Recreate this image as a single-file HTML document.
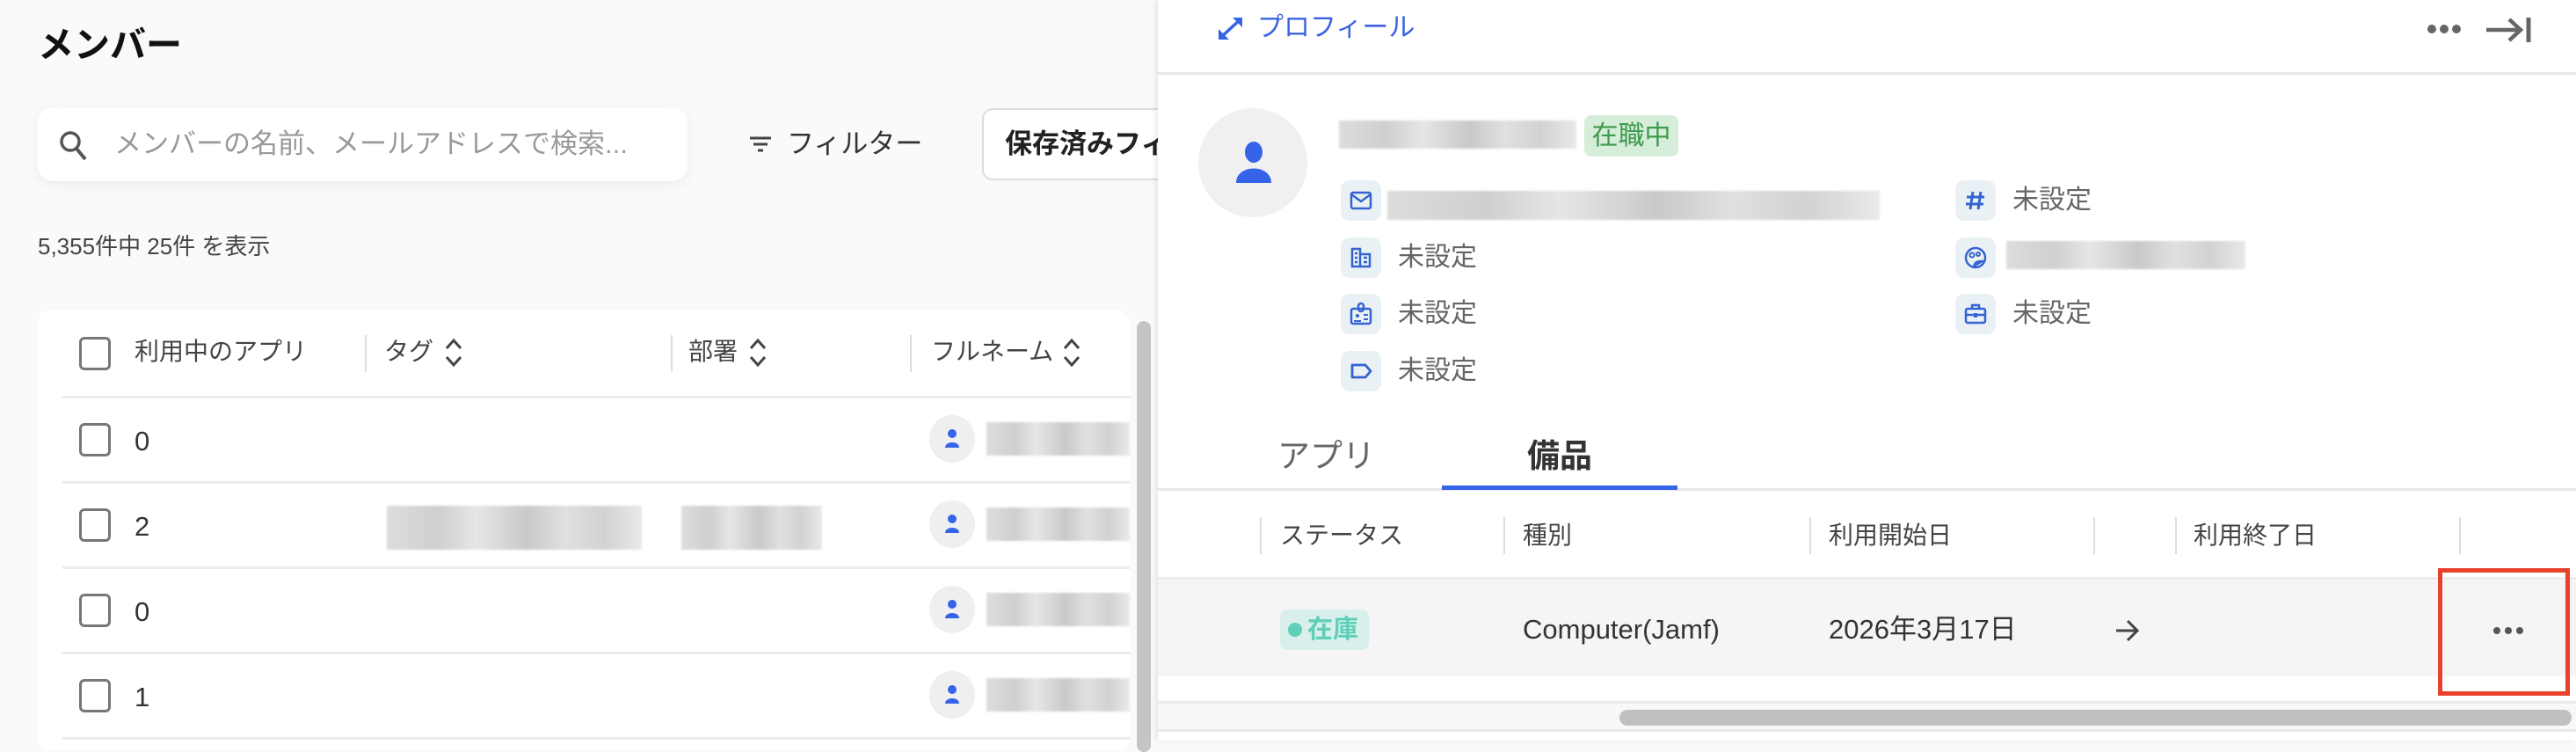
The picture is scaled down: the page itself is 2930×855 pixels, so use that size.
<!DOCTYPE html>
<html><head><meta charset="utf-8"><style>
*{margin:0;padding:0;box-sizing:border-box}
body{width:2930px;height:842px;overflow:hidden;background:#fafafa;font-family:"Liberation Sans","Noto Sans CJK JP",sans-serif;position:relative;color:#333;line-height:1}
.a{position:absolute;white-space:nowrap}
.blur{position:absolute;background:linear-gradient(90deg,#ddd,#cfcfcf 20%,#e6e6e6 35%,#c9c9c9 55%,#e0e0e0 70%,#d2d2d2 85%,#e9e9e9);filter:blur(1px)}
.cb{position:absolute;left:90px;width:36px;height:38px;border:3px solid #777;border-radius:6px;background:#fff}
.hl{position:absolute;height:3px;background:#ebebeb}
.sep{position:absolute;width:2px;background:#ddd}
.av{position:absolute;left:1057px;width:52px;height:54px;border-radius:50%;background:#efefef}
.ib{position:absolute;width:46px;height:46px;border-radius:10px;background:#e9f1f5}
.ib svg{position:absolute;left:9px;top:9px}
.t{position:absolute;font-size:30px;color:#666;white-space:nowrap;line-height:1}
</style></head><body>
<div class="a" style="left:43px;top:31px;font-size:41px;font-weight:bold;color:#111">メンバー</div>
<div class="a" style="left:43px;top:122px;width:739px;height:84px;background:#fff;border-radius:18px;box-shadow:0 4px 14px rgba(0,0,0,.06)"></div>
<svg class="a" style="left:66px;top:147px" width="36" height="38" viewBox="0 0 36 38"><circle cx="14" cy="14" r="10" fill="none" stroke="#555" stroke-width="3.5"/><path d="M21 22l10 12" stroke="#555" stroke-width="4"/></svg>
<div class="a" style="left:130px;top:148px;font-size:31px;color:#999">メンバーの名前、メールアドレスで検索...</div>
<svg class="a" style="left:851px;top:154px" width="28" height="22"><path d="M2 3h24M6 10h16M11 17h6" stroke="#444" stroke-width="3"/></svg>
<div class="a" style="left:895px;top:148px;font-size:31px;color:#333">フィルター</div>
<div class="a" style="left:1117px;top:123px;width:260px;height:82px;background:#fff;border:2px solid #ddd;border-radius:12px"></div>
<div class="a" style="left:1143px;top:148px;font-size:31px;font-weight:bold;color:#222">保存済みフィルター</div>
<div class="a" style="left:43px;top:267px;font-size:26px;color:#444">5,355件中 25件 を表示</div>
<div class="a" style="left:43px;top:353px;width:1242px;height:500px;background:#fff;border-radius:14px"></div>
<div class="cb" style="top:383px"></div>
<div class="a" style="left:153px;top:386px;font-size:28px;color:#444">利用中のアプリ</div>
<div class="sep" style="left:415px;top:381px;height:42px"></div>
<div class="a" style="left:437px;top:386px;font-size:28px;color:#444">タグ</div>
<div class="sep" style="left:763px;top:381px;height:42px"></div>
<div class="a" style="left:783px;top:386px;font-size:28px;color:#444">部署</div>
<div class="sep" style="left:1035px;top:381px;height:42px"></div>
<div class="a" style="left:1059px;top:386px;font-size:28px;color:#444">フルネーム</div>
<svg class="a" style="left:505px;top:384px" width="22" height="34"><path d="M3 12l8-9 8 9M3 22l8 9 8-9" fill="none" stroke="#444" stroke-width="3"/></svg>
<svg class="a" style="left:851px;top:384px" width="22" height="34"><path d="M3 12l8-9 8 9M3 22l8 9 8-9" fill="none" stroke="#444" stroke-width="3"/></svg>
<svg class="a" style="left:1208px;top:384px" width="22" height="34"><path d="M3 12l8-9 8 9M3 22l8 9 8-9" fill="none" stroke="#444" stroke-width="3"/></svg>
<div class="hl" style="left:71px;top:450px;width:1214px"></div>
<div class="hl" style="left:71px;top:547px;width:1214px"></div>
<div class="hl" style="left:71px;top:644px;width:1214px"></div>
<div class="hl" style="left:71px;top:741px;width:1214px"></div>
<div class="hl" style="left:71px;top:838px;width:1214px"></div>
<div class="cb" style="top:481px"></div><div class="a" style="left:153px;top:486px;font-size:31px">0</div>
<div class="cb" style="top:578px"></div><div class="a" style="left:153px;top:583px;font-size:31px">2</div>
<div class="cb" style="top:675px"></div><div class="a" style="left:153px;top:680px;font-size:31px">0</div>
<div class="cb" style="top:772px"></div><div class="a" style="left:153px;top:777px;font-size:31px">1</div>
<div class="blur" style="left:440px;top:575px;width:290px;height:50px"></div>
<div class="blur" style="left:775px;top:575px;width:160px;height:50px"></div>
<div class="av" style="top:472px"></div><div class="av" style="top:569px"></div><div class="av" style="top:666px"></div><div class="av" style="top:763px"></div>
<svg class="a" style="left:1073px;top:487px" width="20" height="24"><circle cx="10" cy="6" r="5" fill="#3563e9"/><path d="M2 22c0-8 16-8 16 0z" fill="#3563e9"/></svg>
<svg class="a" style="left:1073px;top:584px" width="20" height="24"><circle cx="10" cy="6" r="5" fill="#3563e9"/><path d="M2 22c0-8 16-8 16 0z" fill="#3563e9"/></svg>
<svg class="a" style="left:1073px;top:681px" width="20" height="24"><circle cx="10" cy="6" r="5" fill="#3563e9"/><path d="M2 22c0-8 16-8 16 0z" fill="#3563e9"/></svg>
<svg class="a" style="left:1073px;top:778px" width="20" height="24"><circle cx="10" cy="6" r="5" fill="#3563e9"/><path d="M2 22c0-8 16-8 16 0z" fill="#3563e9"/></svg>
<div class="blur" style="left:1122px;top:480px;width:163px;height:38px"></div>
<div class="blur" style="left:1122px;top:577px;width:163px;height:38px"></div>
<div class="blur" style="left:1122px;top:674px;width:163px;height:38px"></div>
<div class="blur" style="left:1122px;top:771px;width:163px;height:38px"></div>
<div class="a" style="left:1293px;top:365px;width:16px;height:490px;border-radius:8px;background:#c4c4c4"></div>

<!-- right panel -->
<div class="a" style="left:1317px;top:0;width:1613px;height:842px;background:#fff;box-shadow:-3px 0 6px rgba(0,0,0,.08)"></div>
<svg class="a" style="left:1384px;top:17px" width="32" height="30" viewBox="0 0 32 30"><path d="M4 26L28 4" stroke="#3563e9" stroke-width="3.5"/><path d="M18 3h11v11z" fill="#3563e9"/><path d="M2 16v12h12z" fill="#3563e9"/></svg>
<div class="a" style="left:1430px;top:17px;font-size:30px;color:#3b63e0">プロフィール</div>
<svg class="a" style="left:2760px;top:25px" width="40" height="16"><circle cx="6" cy="8" r="5" fill="#666"/><circle cx="20" cy="8" r="5" fill="#666"/><circle cx="34" cy="8" r="5" fill="#666"/></svg>
<svg class="a" style="left:2826px;top:19px" width="54" height="30"><path d="M2 15h40M28 3l13 12-13 12" fill="none" stroke="#666" stroke-width="4.5"/><path d="M50 1v28" stroke="#666" stroke-width="5"/></svg>
<div class="a" style="left:1317px;top:82px;width:1613px;height:3px;background:#e6e6e6"></div>
<div class="a" style="left:1363px;top:123px;width:124px;height:124px;border-radius:50%;background:#f0f0f0"></div>
<svg class="a" style="left:1404px;top:160px" width="44" height="50"><ellipse cx="22" cy="13" rx="10" ry="12" fill="#3563e9"/><path d="M2 48c0-22 40-22 40 0z" fill="#3563e9"/></svg>
<div class="blur" style="left:1523px;top:137px;width:270px;height:32px"></div>
<div class="a" style="left:1802px;top:131px;width:107px;height:47px;border-radius:8px;background:#d6edd9;color:#3f9a50;font-size:30px;line-height:47px;text-align:center">在職中</div>
<div class="ib" style="left:1525px;top:205px"><svg width="28" height="28"><rect x="3" y="5" width="22" height="18" rx="2" fill="none" stroke="#3563d0" stroke-width="2.5"/><path d="M3 7l11 8 11-8" fill="none" stroke="#3563d0" stroke-width="2.5"/></svg></div>
<div class="blur" style="left:1578px;top:217px;width:560px;height:33px"></div>
<div class="ib" style="left:1525px;top:270px"><svg width="28" height="28"><path d="M4 4h9v20H4zM13 10h11v14H13M7 9h3M7 14h3M7 19h3M17 14h4M17 19h4" fill="none" stroke="#3563d0" stroke-width="2.5"/></svg></div>
<div class="t" style="left:1590px;top:278px">未設定</div>
<div class="ib" style="left:1525px;top:334px"><svg width="28" height="28"><rect x="3" y="8" width="22" height="17" rx="2" fill="none" stroke="#3563d0" stroke-width="2.5"/><rect x="11" y="2" width="6" height="9" rx="3" fill="none" stroke="#3563d0" stroke-width="2.5"/><circle cx="10" cy="16" r="2" fill="#3563d0"/><path d="M6 22h8M17 15h5M17 20h5" stroke="#3563d0" stroke-width="2"/></svg></div>
<div class="t" style="left:1590px;top:342px">未設定</div>
<div class="ib" style="left:1525px;top:399px"><svg width="28" height="28"><path d="M4 7h15l6 7-6 7H4z" fill="none" stroke="#3563d0" stroke-width="2.8" stroke-linejoin="round"/></svg></div>
<div class="t" style="left:1590px;top:407px">未設定</div>
<div class="ib" style="left:2224px;top:205px"><svg width="28" height="28"><path d="M11 4L8 24M20 4l-3 20M4 10h20M3 18h20" stroke="#3563d0" stroke-width="3"/></svg></div>
<div class="t" style="left:2289px;top:213px">未設定</div>
<div class="ib" style="left:2224px;top:270px"><svg width="28" height="28"><circle cx="14" cy="14" r="11" fill="none" stroke="#3563d0" stroke-width="2.5"/><circle cx="10" cy="11" r="2.5" fill="none" stroke="#3563d0" stroke-width="2"/><circle cx="17" cy="10" r="2" fill="none" stroke="#3563d0" stroke-width="2"/><path d="M12 25c0-6 4-8 12-7" fill="#3563d0" stroke="#3563d0" stroke-width="2"/></svg></div>
<div class="blur" style="left:2282px;top:274px;width:272px;height:32px"></div>
<div class="ib" style="left:2224px;top:334px"><svg width="28" height="28"><rect x="3" y="8" width="22" height="16" rx="2" fill="none" stroke="#3563d0" stroke-width="2.5"/><path d="M10 8V4h8v4M3 15h22" fill="none" stroke="#3563d0" stroke-width="2.5"/><rect x="12" y="13" width="4" height="5" fill="#3563d0"/></svg></div>
<div class="t" style="left:2289px;top:342px">未設定</div>
<div class="a" style="left:1453px;top:500px;font-size:37px;color:#666">アプリ</div>
<div class="a" style="left:1737px;top:500px;font-size:37px;font-weight:bold;color:#333">備品</div>
<div class="a" style="left:1317px;top:555px;width:1613px;height:3px;background:#e8e8e8"></div>
<div class="a" style="left:1640px;top:552px;width:268px;height:5px;background:#3563e9"></div>
<div class="sep" style="left:1433px;top:588px;height:42px"></div>
<div class="sep" style="left:1710px;top:588px;height:42px"></div>
<div class="sep" style="left:2058px;top:588px;height:42px"></div>
<div class="sep" style="left:2381px;top:588px;height:42px"></div>
<div class="sep" style="left:2474px;top:588px;height:42px"></div>
<div class="sep" style="left:2797px;top:588px;height:42px"></div>
<div class="a" style="left:1456px;top:595px;font-size:28px;color:#444">ステータス</div>
<div class="a" style="left:1732px;top:595px;font-size:28px;color:#444">種別</div>
<div class="a" style="left:2080px;top:595px;font-size:28px;color:#444">利用開始日</div>
<div class="a" style="left:2495px;top:595px;font-size:28px;color:#444">利用終了日</div>
<div class="a" style="left:1317px;top:656px;width:1613px;height:3px;background:#ececec"></div>
<div class="a" style="left:1317px;top:659px;width:1613px;height:110px;background:#f6f4f5"></div>
<div class="a" style="left:1456px;top:693px;width:101px;height:46px;border-radius:8px;background:#d9efeb"></div>
<div class="a" style="left:1465px;top:708px;width:16px;height:16px;border-radius:50%;background:#5fcfb9"></div>
<div class="a" style="left:1487px;top:702px;font-size:29px;font-weight:bold;color:#5fcfb9">在庫</div>
<div class="a" style="left:1732px;top:700px;font-size:31px;color:#333">Computer(Jamf)</div>
<div class="a" style="left:2080px;top:700px;font-size:31px;color:#333">2026年3月17日</div>
<svg class="a" style="left:2405px;top:703px" width="30" height="28"><path d="M2 14h24M15 3l11 11-11 11" fill="none" stroke="#444" stroke-width="3"/></svg>
<svg class="a" style="left:2834px;top:710px" width="38" height="14"><circle cx="6" cy="7" r="4" fill="#555"/><circle cx="19" cy="7" r="4" fill="#555"/><circle cx="32" cy="7" r="4" fill="#555"/></svg>
<div class="a" style="left:2773px;top:646px;width:150px;height:145px;border:5px solid #e8412c"></div>
<div class="a" style="left:1317px;top:797px;width:1613px;height:3px;background:#eaeaea"></div>
<div class="a" style="left:1317px;top:800px;width:1613px;height:30px;background:#f8f8f8"></div>
<div class="a" style="left:1842px;top:807px;width:1083px;height:18px;border-radius:9px;background:#c0c0c0"></div>
<div class="a" style="left:1317px;top:829px;width:1613px;height:3px;background:#eaeaea"></div>
</body></html>
